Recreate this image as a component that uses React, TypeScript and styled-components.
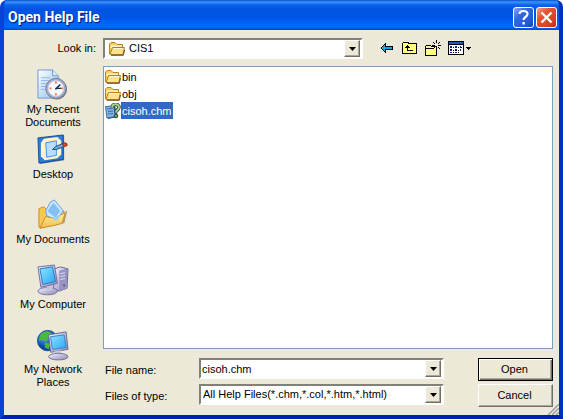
import React, { useState } from "react";
import styled, { createGlobalStyle, css } from "styled-components";

const GlobalStyle = createGlobalStyle`
  * { box-sizing: border-box; }
  body { margin: 0; background: #fff; font-family: "Liberation Sans", Arial, sans-serif; font-size: 11px; line-height: 13px; color: #000; }
  button, input, select { font: inherit; color: inherit; }
`;

const Dialog = styled.section`
  display: flex;
  flex-direction: column;
  min-height: 100vh;
  border: 4px solid #0842d6;
  border-top: 0;
  border-right-color: #0030c0;
  border-bottom-color: #0020b4;
  border-radius: 7px 7px 0 0;
  overflow: hidden;
  background: #0054e3;
`;

const TitleBar = styled.header`
  display: flex;
  align-items: center;
  gap: 2px;
  height: 30px;
  margin: 0 -4px;
  padding: 4px 6px 0 8px;
  background: linear-gradient(#0a50c8 0, #3b93ff 2px, #0a62ee 5px, #0054e0 9px, #0055e5 17px, #0066ff 25px, #0060f4 28px, #0046c8 30px);
`;

const Title = styled.h1`
  flex: 1;
  margin: 0;
  color: #fff;
  font: bold 14px/18px Roboto, sans-serif;
  text-shadow: 1px 1px 1px #0a1883;
`;

const CaptionButton = styled.button<{ $danger?: boolean }>`
  display: grid;
  place-items: center;
  width: 21px;
  height: 21px;
  padding: 0;
  border: 1px solid #fff;
  border-radius: 3px;
  background: ${(p) =>
    p.$danger
      ? "linear-gradient(135deg, #f0a08a, #e25430 35%, #d8421c 75%, #b8300c)"
      : "linear-gradient(135deg, #86a8f4, #3468e0 35%, #2458dc 75%, #1440b8)"};
`;

const Content = styled.main`
  flex: 1;
  display: grid;
  grid-template-columns: 99px minmax(0, 1fr);
  grid-template-rows: 36px minmax(283px, 1fr) auto;
  padding-right: 6px;
  background: #ece9d8;
`;

const LookInLabel = styled.label`
  padding: 12px 7px 0 0;
  text-align: right;
`;

const LookInRow = styled.div`
  display: flex;
  align-items: flex-start;
  gap: 17px;
  padding-top: 8px;
`;

const ComboFrame = styled.div<{ $withIcon?: boolean }>`
  flex: 1;
  display: flex;
  align-items: center;
  gap: ${(p) => (p.$withIcon ? "2px" : "0")};
  min-width: 0;
  height: 21px;
  padding: 0 1px 0 ${(p) => (p.$withIcon ? "4px" : "0")};
  border: 2px solid;
  border-color: #828177 #fff #fff #828177;
  background: #fff;
`;

const fieldStyle = css`
  flex: 1;
  min-width: 0;
  height: 17px;
  border: 0;
  outline: 0;
  border-radius: 0;
  background: transparent;
`;

const Select = styled.select`
  ${fieldStyle}
  appearance: none;
  padding: 0 2px;
`;

const TextField = styled.input`
  ${fieldStyle}
  padding: 1px 1px 0;
`;

const raised = css`
  border: 1px solid;
  border-color: #fff #716f64 #716f64 #fff;
  background: #ece9d8;
  box-shadow: inset -1px -1px #aca899;
`;

const DropArrow = styled.button`
  display: grid;
  place-items: center;
  flex: none;
  width: 16px;
  height: 17px;
  padding: 0;
  ${raised}
`;

const Tools = styled.div`
  display: flex;
  align-items: center;
  flex: 0 0 173px;
  height: 20px;
  gap: 5px;
`;

const ToolButton = styled.button`
  display: flex;
  align-items: center;
  height: 18px;
  padding: 0;
  border: 0;
  background: transparent;
`;

const Places = styled.nav`
  display: flex;
  flex-direction: column;
  grid-row: 2 / 4;
  padding-top: 3px;
`;

const Place = styled.button`
  display: flex;
  flex-direction: column;
  align-items: center;
  gap: 2px;
  height: 65px;
  padding: 0 10px 0 9px;
  border: 0;
  background: transparent;
  text-align: center;
`;

const FileList = styled.ul`
  margin: 0;
  padding: 1px;
  border: 1px solid #7f9db9;
  background: #fff;
  list-style: none;
`;

const FileRow = styled.li`
  display: flex;
`;

const FileButton = styled.button`
  display: flex;
  align-items: center;
  height: 17px;
  padding: 0;
  border: 0;
  background: transparent;
`;

const FileName = styled.span<{ $selected: boolean }>`
  padding: 3px 1px 1px;
  color: ${(p) => (p.$selected ? "#fff" : "#000")};
  background: ${(p) => (p.$selected ? "#316ac5" : "transparent")};
`;

const Footer = styled.form`
  display: grid;
  grid-template-columns: 96px minmax(0, 1fr) 75px;
  grid-template-rows: 23px 23px;
  row-gap: 3px;
  padding: 9px 0 8px;
`;

const FieldLabel = styled.label`
  align-self: center;
  padding: 2px 0 0 2px;
`;

const FieldCell = styled.div`
  display: flex;
  align-items: flex-start;
  padding-right: 34px;
`;

const ActionButton = styled.button<{ $primary?: boolean }>`
  padding: 0 2px 0 0;
  ${raised}
  ${(p) => p.$primary && css`
    border-color: #000;
    box-shadow: inset 1px 1px #fff, inset -1px -1px #716f64, inset -2px -2px #aca899;
  `}
`;

const Grip = styled.svg`
  position: absolute;
  right: 4px;
  bottom: 4px;
`;

const Shell = styled.div`
  position: relative;
`;

const Gradients = styled.svg`
  display: block;
`;

const Triangle = () => (
  <svg width="7" height="4" aria-hidden="true"><path d="M0 0H7L3.5 4Z" /></svg>
);

const Folder = () => (
  <svg width="16" height="16" viewBox="0 0 16 16" aria-hidden="true">
    <path d="M.5 13V3L2 1.5H6L8 3.5H13.5V7" fill="#f5cf61" stroke="#b88422" />
    <path d="M1.5 4.5H13V7H1.5Z" fill="#fff3bd" />
    <path d="M1 13.5 3.5 6.5H15.5L13.8 13.5Z" fill="#fce28a" stroke="#b47c20" />
    <path d="M4.2 7.5H14" stroke="#fff8d4" />
    <path d="M2 14.3H14.3L15.5 9" fill="none" stroke="#6e4c1c" />
  </svg>
);

const HelpFile = () => (
  <svg width="16" height="16" viewBox="0 0 16 16" aria-hidden="true">
    <path d="M1 4 10 3 13 14 3 16Z" fill="#284c78" />
    <path d="M.5 3.5 8.5 3 10.5 13.5 2 15Z" fill="#88b4e4" stroke="#39689c" />
    <path d="m2.5 6 5-.5M3 8.5 8 8M3 11l5-.5" stroke="#3568a4" />
    <path d="M7.2 4.5C7 .5 14 .3 14 4 14 7 11 6.5 11 9.5" fill="none" stroke="#244830" strokeWidth="3.6" />
    <path d="M7.2 4.5C7 .5 14 .3 14 4 14 7 11 6.5 11 9.5" fill="none" stroke="#a8d488" strokeWidth="2" />
    <circle cx="11" cy="13" r="1.8" fill="#6da85c" stroke="#244830" />
  </svg>
);

const BackIcon = () => (
  <svg width="16" height="16" viewBox="0 0 16 16" shapeRendering="crispEdges" aria-hidden="true">
    <path d="M1 7h1V6h1V5h1V4h1V3h1v3h7v4H6v3H5v-1H4v-1H3v-1H2V9H1Z" />
    <path d="M2 8V7h1V6h1V5h1v2h7v2H5v2H4v-1H3V9H2Z" fill="#00a8f0" />
  </svg>
);

const UpIcon = () => (
  <svg width="18" height="16" viewBox="0 0 18 16" shapeRendering="crispEdges" aria-hidden="true">
    <path d="M1.5 13.5V3.5L2.5 2.5H6.5L8.5 3.5H15.5V13.5Z" fill="#ffff80" stroke="#000" />
    <path d="M6 5h1v1h1v1h1v1H7v2h5v1H6V8H4V7h1V6h1Z" />
  </svg>
);

const NewFolderIcon = () => (
  <svg width="18" height="17" viewBox="0 0 18 17" shapeRendering="crispEdges" aria-hidden="true">
    <path d="M1.5 15.5V6.5L2.5 5.5H6.5L7.5 6.5H12.5V15.5Z" fill="#ffff80" stroke="#000" />
    <path d="M2 8.5H10" stroke="#000" />
    <path d="M12 0h1v3h-1ZM12 8h1v3h-1ZM14 5h3v1h-3ZM8 5h3v1H8ZM9 2h1v1H9ZM10 3h1v1h-1ZM15 2h1v1h-1ZM14 3h1v1h-1ZM14 7h1v1h-1ZM15 8h1v1h-1ZM10 7h1v1h-1Z" />
  </svg>
);

const ViewsIcon = () => (
  <svg width="25" height="16" viewBox="0 0 25 16" shapeRendering="crispEdges" aria-hidden="true">
    <path d="M1.5 1.5H16.5V14.5H1.5Z" fill="#fff" stroke="#000" />
    <path d="M2 2H16V4H2Z" fill="#1c5ac8" />
    <path d="M2 4.5H16" stroke="#000" />
    <path d="M3 6h2v2H3ZM8 6h2v2H8ZM13 6h1v2h-1ZM3 9h2v2H3ZM8 9h2v2H8ZM13 9h1v2h-1ZM3 12h2v1H3ZM8 12h2v1H8Z" fill="#142080" />
    <path d="M6 7h1v1H6ZM11 7h1v1h-1ZM6 10h1v1H6ZM11 10h1v1h-1ZM6 12h1v1H6ZM11 12h1v1h-1ZM14 7h1v1h-1Z" />
    <path d="M19 7h5v1h-1v1h-1v1h-1V9h-1V8h-1Z" />
  </svg>
);

const Defs = () => (
  <Gradients width="0" height="0" aria-hidden="true">
    <defs>
      <linearGradient id="paper" x2="1" y2="1"><stop stopColor="#fff" /><stop offset="1" stopColor="#8cbff0" /></linearGradient>
      <linearGradient id="screen" x2="1" y2="1"><stop stopColor="#8fe4ff" /><stop offset="1" stopColor="#2ba6f4" /></linearGradient>
      <linearGradient id="gold" x2="0" y2="1"><stop stopColor="#fff2a8" /><stop offset="1" stopColor="#f4bc48" /></linearGradient>
      <linearGradient id="metal" x2="1" y2="1"><stop stopColor="#f7f6ff" /><stop offset="1" stopColor="#8884b8" /></linearGradient>
      <radialGradient id="earth" cx=".35" cy=".3"><stop stopColor="#68b5ff" /><stop offset="1" stopColor="#0a43aa" /></radialGradient>
    </defs>
  </Gradients>
);

const RecentIcon = () => (
  <>
    <path d="M1 1H16L22 7V30H1Z" fill="url(#paper)" stroke="#7099cd" />
    <path d="M16 1V7H22" fill="#d2e6fc" stroke="#7099cd" />
    <path d="M4 9H14M4 12H12M4 15H11M4 18H10M4 21H9" stroke="#8eb8ea" />
    <circle cx="20.5" cy="21" r="10.5" fill="#777889" />
    <circle cx="19.5" cy="20" r="10.5" fill="#a7abc0" stroke="#777f9d" />
    <circle cx="19.5" cy="20" r="8" fill="#f4faff" stroke="#cfd4e6" />
    <path d="M19.5 13v2M19.5 25v2M13 20h2M25 20h2" stroke="#f07a40" strokeWidth="2" />
    <path d="m24 16-5 5M19 20h6" fill="none" stroke="#152c4b" strokeWidth="1.5" />
  </>
);

const DesktopIcon = () => (
  <>
    <path d="m2 5 26-4v26L3 31Z" fill="#58728c" />
    <path d="m1 4 26-3v25L2 30Z" fill="#2c7cd8" stroke="#1b4ca0" />
    <path d="m7 5 14-2 4 4v14l-4 4-13 2-4-4V9Z" fill="#fff3c9" />
    <path d="m9 9 11-2v15l-10 2Z" fill="#b9ddff" stroke="#4293e6" />
    <path d="m16 16 3-3 7-3 2 3-8 3Z" fill="#73a8d8" stroke="#244c79" />
    <path d="m26 10 3-1 2 1v2l-3 1Z" fill="#e24820" stroke="#8b2d20" />
  </>
);

const DocumentsIcon = () => (
  <>
    <path d="M4 31 28 25 31 13 30 12 27 25Z" fill="#6d5430" opacity=".6" />
    <path d="M2 29V10l5-2 3 3 5 1 13 1v10L4 30Z" fill="#f7c954" stroke="#c88c28" />
    <path d="m9 12 5-9 4-2 9 11-7 11-10-6Z" fill="#c8e6ff" stroke="#65a0df" />
    <path d="m13 9 4-5 7 8-5 7-8-6Z" fill="#83bef4" />
    <path d="m3 30 6-12 9 2 11-6-3 11-7 2Z" fill="url(#gold)" stroke="#c88c28" />
    <path d="m15 20 10-4-5 7Z" fill="#9ccfec" />
  </>
);

const MonitorShape = () => (
  <>
    <ellipse cx="11" cy="28" rx="10" ry="3.8" fill="url(#metal)" stroke="#77779a" />
    <path d="m9 20 7-1v7l-6 1Z" fill="#c6c4dd" />
    <path d="m1 3 17-2 3 19-17 4Z" fill="url(#metal)" stroke="#72719c" />
    <path d="m3 5 13-2 3 15-13 3Z" fill="url(#screen)" stroke="#237ccb" />
  </>
);

const ComputerIcon = () => (
  <>
    <path d="m18 5 6-2 8 2-1 20-8 3-6-3Z" fill="url(#metal)" stroke="#68678d" />
    <path d="m23 7 8-2v20l-8 3Z" fill="#9794c2" />
    <path d="m24 10 5-1M24 13l5-1M24 16l5-1" stroke="#e0def4" />
    <path d="M27 21h2v2h-2Z" fill="#5b5889" />
    <MonitorShape />
  </>
);

const NetworkIcon = () => (
  <>
    <circle cx="11" cy="12" r="10.5" fill="url(#earth)" stroke="#174d9a" />
    <path d="m5 4 6-2 5 3-4 3-2 5-5-2-3 2 1-6ZM8 14l6 1-2 6-4-2Z" fill="#49b83e" />
    <path d="m12 6 18-3 2 18-18 3Z" fill="url(#metal)" stroke="#686890" />
    <path d="m14 8 14-2 2 13-14 2Z" fill="url(#screen)" stroke="#3a82c5" />
    <path d="m18 23 7-1v6h-6Z" fill="#c8c6de" />
    <ellipse cx="22" cy="28.5" rx="10" ry="3.4" fill="url(#metal)" stroke="#73738e" />
  </>
);

const places = [
  { name: "My Recent Documents", Icon: RecentIcon },
  { name: "Desktop", Icon: DesktopIcon },
  { name: "My Documents", Icon: DocumentsIcon },
  { name: "My Computer", Icon: ComputerIcon },
  { name: "My Network Places", Icon: NetworkIcon },
];

const files = [
  { name: "bin", Icon: Folder },
  { name: "obj", Icon: Folder },
  { name: "cisoh.chm", Icon: HelpFile },
];

export default function App() {
  const [selected, setSelected] = useState("cisoh.chm");
  return (
    <Shell>
      <GlobalStyle />
      <Defs />
      <Dialog aria-labelledby="title">
        <TitleBar>
          <Title id="title">Open Help File</Title>
          <CaptionButton aria-label="Help">
            <svg width="15" height="17" viewBox="0 0 15 17"><path d="M3.5 5C3.5 1 11.5 1 11.5 5c0 3-4 3-4 6" fill="none" stroke="#fff" strokeWidth="2.2" /><path d="M6.4 13h2.4v2.4H6.4Z" fill="#fff" /></svg>
          </CaptionButton>
          <CaptionButton $danger aria-label="Close">
            <svg width="13" height="13"><path d="m1.5 1.5 10 10m0-10-10 10" stroke="#fff" strokeWidth="2.4" /></svg>
          </CaptionButton>
        </TitleBar>
        <Content>
          <LookInLabel htmlFor="folder">Look in:</LookInLabel>
          <LookInRow>
            <ComboFrame $withIcon>
              <Folder />
              <Select id="folder"><option>CIS1</option></Select>
              <DropArrow as="span"><Triangle /></DropArrow>
            </ComboFrame>
            <Tools>
              <ToolButton aria-label="Back"><BackIcon /></ToolButton>
              <ToolButton aria-label="Up one level"><UpIcon /></ToolButton>
              <ToolButton aria-label="New folder"><NewFolderIcon /></ToolButton>
              <ToolButton aria-label="Views"><ViewsIcon /></ToolButton>
            </Tools>
          </LookInRow>
          <Places aria-label="Places">
            {places.map(({ name, Icon }) => (
              <Place key={name}>
                <svg width="32" height="32" viewBox="0 0 33 33" aria-hidden="true"><Icon /></svg>
                <span>{name}</span>
              </Place>
            ))}
          </Places>
          <FileList aria-label="Files">
            {files.map(({ name, Icon }) => (
              <FileRow key={name}>
                <FileButton aria-pressed={selected === name} onClick={() => setSelected(name)}>
                  <Icon />
                  <FileName $selected={selected === name}>{name}</FileName>
                </FileButton>
              </FileRow>
            ))}
          </FileList>
          <Footer onSubmit={(e) => e.preventDefault()}>
            <FieldLabel htmlFor="name">File name:</FieldLabel>
            <FieldCell>
              <ComboFrame>
                <TextField id="name" defaultValue="cisoh.chm" />
                <DropArrow type="button" aria-label="Recent file names"><Triangle /></DropArrow>
              </ComboFrame>
            </FieldCell>
            <ActionButton type="submit" $primary>Open</ActionButton>
            <FieldLabel htmlFor="type">Files of type:</FieldLabel>
            <FieldCell>
              <ComboFrame>
                <Select id="type"><option>All Help Files(*.chm,*.col,*.htm,*.html)</option></Select>
                <DropArrow as="span"><Triangle /></DropArrow>
              </ComboFrame>
            </FieldCell>
            <ActionButton type="button">Cancel</ActionButton>
          </Footer>
        </Content>
      </Dialog>
      <Grip width="12" height="12" viewBox="0 0 12 12" aria-hidden="true">
        <path d="M0 12 12 0M4 12l8-8M8 12l4-4" stroke="#fff" />
        <path d="M1 12 12 1M5 12l7-7M9 12l3-3" stroke="#9d9a8b" strokeWidth="1.5" />
      </Grip>
    </Shell>
  );
}
